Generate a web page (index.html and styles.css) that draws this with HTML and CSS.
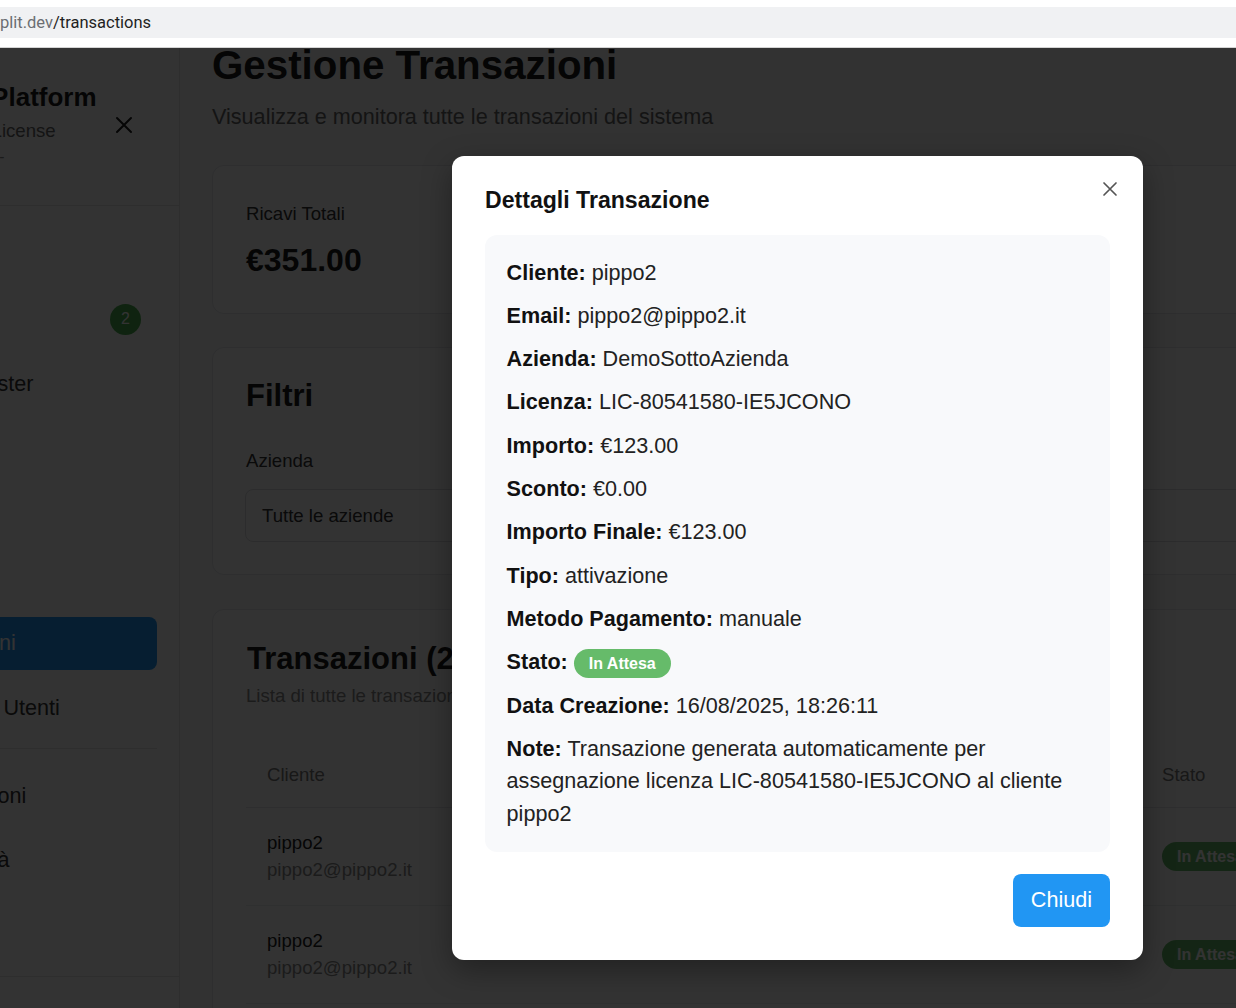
FILE: index.html
```html
<!DOCTYPE html>
<html lang="it">
<head>
<meta charset="utf-8">
<title>Gestione Transazioni</title>
<link rel="stylesheet" href="styles.css">
</head>
<body>
<div class="browserbar">
  <div class="urlfield"><span class="url-host">plit.dev</span><span class="url-path">/transactions</span></div>
</div>
<div class="viewport">
  <div class="layout">
    <aside class="sidebar">
      <div class="sb-header">
        <div class="brand">
          <div class="brand-title">Admin Platform</div>
          <div class="brand-sub">Gestione License</div>
          <div class="brand-role">Super Admin -</div>
        </div>
        <button class="sb-close" type="button" aria-label="Chiudi menu">
          <svg viewBox="0 0 24 24" width="24" height="24"><path d="M5 5L19 19M19 5L5 19" stroke="#1a1a1a" stroke-width="2" fill="none" stroke-linecap="round"/></svg>
        </button>
      </div>
      <nav class="sb-nav">
        <div class="nav-group">
          <a class="nav-item">Home</a>
          <a class="nav-item">Notifiche <span class="nav-badge">2</span></a>
          <a class="nav-item">Utenti Master</a>
          <a class="nav-item">Aziende</a>
          <a class="nav-item">Licenze</a>
          <a class="nav-item">Clienti</a>
          <a class="nav-item active">Transazioni</a>
          <a class="nav-item">Gestione&nbsp; Utenti</a>
        </div>
        <div class="nav-divider"></div>
        <div class="nav-group">
          <a class="nav-item">Impostazioni</a>
          <a class="nav-item">Log attività</a>
        </div>
      </nav>
      <div class="sb-footer">
        <a class="nav-item">Esci</a>
      </div>
    </aside>

    <main class="main">
      <header class="page-head">
        <h1 class="page-title">Gestione Transazioni</h1>
        <p class="page-sub">Visualizza e monitora tutte le transazioni del sistema</p>
      </header>

      <section class="stats">
        <div class="card stat">
          <div class="stat-label">Ricavi Totali</div>
          <div class="stat-value">€351.00</div>
        </div>
        <div class="card stat">
          <div class="stat-label">Transazioni</div>
          <div class="stat-value">2</div>
        </div>
        <div class="card stat">
          <div class="stat-label">In Attesa</div>
          <div class="stat-value">2</div>
        </div>
      </section>

      <section class="card filters">
        <h2 class="card-title">Filtri</h2>
        <div class="filter-grid">
          <div class="field">
            <span class="field-label">Azienda</span>
            <div class="select">Tutte le aziende</div>
          </div>
          <div class="field">
            <span class="field-label">Stato</span>
            <div class="select">Tutti gli stati</div>
          </div>
          <div class="field">
            <span class="field-label">Tipo</span>
            <div class="select">Tutti i tipi</div>
          </div>
        </div>
      </section>

      <section class="card tx">
        <h2 class="card-title">Transazioni (2)</h2>
        <p class="muted">Lista di tutte le transazioni</p>
        <table class="tx-table">
          <colgroup>
            <col class="c-cliente"><col class="c-azienda"><col class="c-licenza"><col class="c-importo"><col class="c-tipo"><col class="c-stato"><col>
          </colgroup>
          <thead>
            <tr><th>Cliente</th><th>Azienda</th><th>Licenza</th><th>Importo</th><th>Tipo</th><th>Stato</th><th>Azioni</th></tr>
          </thead>
          <tbody>
            <tr>
              <td><div class="cli-name">pippo2</div><div class="cli-email">pippo2@pippo2.it</div></td>
              <td>DemoSottoAzienda</td>
              <td>LIC-80541580-IE5JCONO</td>
              <td>€123.00</td>
              <td>attivazione</td>
              <td class="td-mid"><span class="badge">In Attesa</span></td>
              <td>Dettagli</td>
            </tr>
            <tr>
              <td><div class="cli-name">pippo2</div><div class="cli-email">pippo2@pippo2.it</div></td>
              <td>DemoSottoAzienda</td>
              <td>LIC-80541580-IE5JCONO</td>
              <td>€228.00</td>
              <td>attivazione</td>
              <td class="td-mid"><span class="badge">In Attesa</span></td>
              <td>Dettagli</td>
            </tr>
          </tbody>
        </table>
      </section>
    </main>
  </div>

  <div class="overlay">
    <div class="modal" role="dialog" aria-label="Dettagli Transazione">
      <button class="modal-close" type="button" aria-label="Chiudi">
        <svg viewBox="0 0 24 24" width="24" height="24"><path d="M6 6L18 18M18 6L6 18" stroke="#555" stroke-width="1.7" fill="none" stroke-linecap="round"/></svg>
      </button>
      <h3 class="modal-title">Dettagli Transazione</h3>
      <div class="detail-box">
        <p><b>Cliente:</b> pippo2</p>
        <p><b>Email:</b> pippo2@pippo2.it</p>
        <p><b>Azienda:</b> DemoSottoAzienda</p>
        <p><b>Licenza:</b> LIC-80541580-IE5JCONO</p>
        <p><b>Importo:</b> €123.00</p>
        <p><b>Sconto:</b> €0.00</p>
        <p><b>Importo Finale:</b> €123.00</p>
        <p><b>Tipo:</b> attivazione</p>
        <p><b>Metodo Pagamento:</b> manuale</p>
        <p><b>Stato:</b> <span class="badge badge-mid">In Attesa</span></p>
        <p><b>Data Creazione:</b> 16/08/2025, 18:26:11</p>
        <p><b>Note:</b> Transazione generata automaticamente per assegnazione licenza LIC-80541580-IE5JCONO al cliente pippo2</p>
      </div>
      <div class="modal-actions">
        <button class="btn-primary" type="button">Chiudi</button>
      </div>
    </div>
  </div>
</div>
</body>
</html>
```

FILE: styles.css
```css
html, body {
  margin: 0;
  padding: 0;
}

body {
  width: 1236px;
  height: 1008px;
  overflow: hidden;
  font-family: "Liberation Sans", Arial, sans-serif;
  background: #ffffff;
  color: #222;
}

/* ---------- browser address strip ---------- */
.browserbar {
  height: 48px;
  box-sizing: border-box;
  padding-top: 7px;
  background: #ffffff;
  border-bottom: 1px solid #d4d4d4;
}

.urlfield {
  height: 31px;
  display: flex;
  align-items: center;
  background: #f0f1f3;
  font-family: Roboto, "Noto Sans", sans-serif;
  font-size: 16.5px;
  white-space: nowrap;
}

.url-host { color: #6b6e72; }
.url-path { color: #1f1f1f; }

/* ---------- app viewport ---------- */
.viewport {
  position: relative;
  height: 960px;
  overflow: hidden;
  background: #f8f9fa;
}

.layout {
  display: flex;
  width: 1500px;
  margin-left: -120px;
}

/* ---------- sidebar ---------- */
.sidebar {
  width: 300px;
  flex: none;
  box-sizing: border-box;
  background: #ffffff;
  border-right: 1px solid #e3e3e3;
}

.sb-header {
  display: flex;
  align-items: center;
  justify-content: space-between;
  padding: 34px 39px 37px 25px;
  border-bottom: 1px solid #e3e3e3;
}

.brand { white-space: nowrap; }

.brand-title {
  font-size: 26px;
  line-height: 31px;
  font-weight: 700;
  color: #1a1a1a;
  margin-left: -2px;
}

.brand-sub {
  margin: 4px 0 0 7px;
  font-size: 18.6px;
  line-height: 28px;
  color: #666;
}

.brand-role {
  font-size: 15.7px;
  line-height: 23px;
  color: #888;
}

.sb-close {
  width: 32px;
  height: 32px;
  padding: 4px;
  border: 0;
  background: none;
  display: flex;
  align-items: center;
  justify-content: center;
}

.sb-nav {
  padding: 22.5px 22px 88.8px 12px;
}

.nav-group {
  display: flex;
  flex-direction: column;
  gap: 11.7px;
}

.nav-item {
  display: flex;
  align-items: center;
  justify-content: space-between;
  height: 53px;
  box-sizing: border-box;
  padding: 0 16px 0 13px;
  border-radius: 8px;
  font-size: 21.6px;
  line-height: 32.4px;
  color: #333;
  text-decoration: none;
  white-space: nowrap;
}

.nav-item.active {
  background: #2196f3;
  color: #ffffff;
}

.nav-badge {
  width: 31px;
  height: 31px;
  border-radius: 50%;
  background: #4caf50;
  color: #ffffff;
  font-size: 16px;
  display: flex;
  align-items: center;
  justify-content: center;
}

.nav-divider {
  height: 1px;
  background: #e3e3e3;
  margin: 13.3px 0 20.8px;
}

.sb-footer {
  border-top: 1px solid #e3e3e3;
  padding: 12px 22px 12px 12px;
}

/* ---------- main ---------- */
.main {
  flex: 1;
  min-width: 0;
  padding: 0 32px 40px;
}

.page-head { margin-top: -6px; }

.page-title {
  margin: 0;
  font-size: 40.3px;
  line-height: 48px;
  font-weight: 700;
  color: #1a1a1a;
}

.page-sub {
  margin: 11.3px 0 0;
  font-size: 21.6px;
  line-height: 32.4px;
  color: #666;
}

.card {
  background: #ffffff;
  border: 1px solid #e4e6ea;
  border-radius: 12px;
}

.stats {
  display: grid;
  grid-template-columns: repeat(3, 1fr);
  gap: 24px;
  margin-top: 31.3px;
}

.stat { padding: 34px 33px; }

.stat-label {
  font-size: 18.6px;
  line-height: 28px;
  color: #333;
}

.stat-value {
  margin-top: 13px;
  font-size: 32px;
  line-height: 38px;
  font-weight: 700;
  color: #1a1a1a;
}

.filters {
  margin-top: 33px;
  padding: 32px 32px 32px 33px;
}

.card-title {
  margin: 0;
  font-size: 31px;
  line-height: 32px;
  font-weight: 700;
  color: #1a1a1a;
  white-space: nowrap;
}

.filter-grid {
  display: grid;
  grid-template-columns: repeat(3, 1fr);
  gap: 24px;
  margin-top: 35px;
}

.field-label {
  display: block;
  font-size: 18.6px;
  line-height: 28px;
  color: #333;
}

.select {
  margin-top: 14px;
  margin-left: -1px;
  height: 53px;
  box-sizing: border-box;
  display: flex;
  align-items: center;
  padding: 0 16px;
  border: 1px solid #dcdde0;
  border-radius: 8px;
  background: #ffffff;
  font-size: 18.6px;
  color: #333;
}

.tx {
  margin-top: 34px;
  padding: 33px 32px 32px 33px;
}

.tx .card-title { margin-left: 1px; }

.muted {
  margin: 7px 0 0;
  font-size: 18.6px;
  line-height: 28px;
  color: #888;
  white-space: nowrap;
}

.tx-table {
  width: 100%;
  margin-top: 34.6px;
  table-layout: fixed;
  border-collapse: collapse;
}

.c-cliente { width: 220px; }
.c-azienda { width: 190px; }
.c-licenza { width: 230px; }
.c-importo { width: 135px; }
.c-tipo { width: 120px; }
.c-stato { width: 140px; }

.tx-table th {
  text-align: left;
  font-weight: 400;
  font-size: 18.6px;
  line-height: 28px;
  color: #777;
  padding: 16px 21px 18px;
  border-bottom: 1px solid #e5e7eb;
  white-space: nowrap;
}

.tx-table td {
  padding: 21px;
  font-size: 18.6px;
  line-height: 27.5px;
  color: #333;
  vertical-align: top;
  white-space: nowrap;
  overflow: hidden;
  border-bottom: 1px solid #eceef1;
}

.tx-table td.td-mid { vertical-align: middle; }

.cli-name { color: #222; }
.cli-email { color: #888; }

.badge {
  display: inline-block;
  padding: 5px 15px;
  border-radius: 999px;
  background: #66bb6a;
  color: #ffffff;
  font-size: 16px;
  line-height: 19px;
  font-weight: 700;
  white-space: nowrap;
}

.badge-mid { vertical-align: middle; }

/* ---------- modal ---------- */
.overlay {
  position: absolute;
  inset: 0;
  background: rgba(0, 0, 0, 0.8);
}

.modal {
  position: relative;
  width: 691px;
  box-sizing: border-box;
  margin: 108px 0 0 452px;
  padding: 31px 33px 33px;
  background: #ffffff;
  border-radius: 12px;
  box-shadow: 0 10px 30px rgba(0, 0, 0, 0.35);
}

.modal-close {
  position: absolute;
  top: 21px;
  right: 21px;
  width: 24px;
  height: 24px;
  padding: 0;
  border: 0;
  background: none;
}

.modal-title {
  margin: 0;
  font-size: 23.1px;
  line-height: 27.6px;
  font-weight: 700;
  color: #111;
}

.detail-box {
  margin-top: 20.4px;
  padding: 21.6px 21.6px 22.4px;
  background: #f8f9fb;
  border-radius: 12px;
}

.detail-box p {
  margin: 0 0 10.9px;
  font-size: 21.6px;
  line-height: 32.4px;
  color: #222;
}

.detail-box p:last-child { margin-bottom: 0; }

.detail-box b { color: #111; }

.modal-actions {
  display: flex;
  justify-content: flex-end;
  margin-top: 21.3px;
}

.btn-primary {
  padding: 10.6px 18px;
  border: 0;
  border-radius: 8px;
  background: #2196f3;
  color: #ffffff;
  font-family: "Liberation Sans", Arial, sans-serif;
  font-size: 21.6px;
  line-height: 32.4px;
}
```
